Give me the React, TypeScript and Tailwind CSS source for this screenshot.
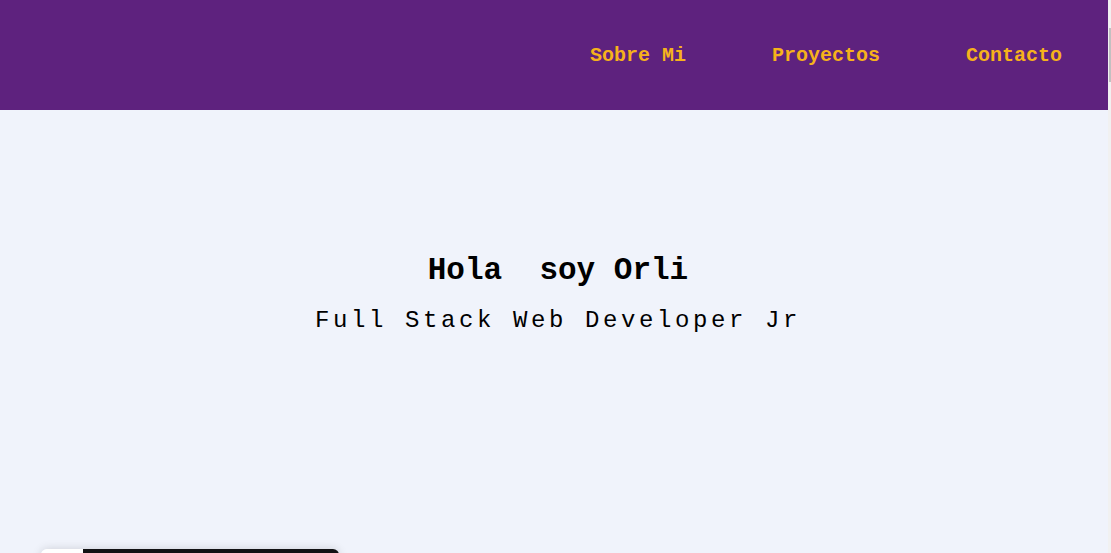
const links = ['Sobre Mi', 'Proyectos', 'Contacto'];

export default function App() {
  return (
    <div className="flex h-[553px] w-full overflow-hidden bg-[#f0f3fb]" style={{ fontFamily: '"Liberation Mono", "Courier New", monospace' }}>
      <div className="flex-1 min-w-0">
        <header className="h-[110px] bg-[#5e227e] flex items-center justify-end pr-[46px] pt-[2px]">
          <nav className="flex gap-[86px]">
            {links.map((l) => (
              <a key={l} href="#" className="text-[20px] font-bold text-[#f6b21b] leading-none">
                {l}
              </a>
            ))}
          </nav>
        </header>
        <section className="h-[439px] flex flex-col items-center pt-[145px]">
          <h1 className="text-[31px] font-bold text-black leading-none whitespace-pre pl-[8px]">Hola  soy Orli</h1>
          <p className="mt-[23px] text-[24px] leading-none text-black tracking-[3.6px] pl-[8px]">Full Stack Web Developer Jr</p>
        </section>
        <div className="ml-[41px] w-[298px] h-[40px] rounded-t-md overflow-hidden flex shadow-[0_0_10px_rgba(0,0,0,0.15)]">
          <div className="w-[42px] bg-white" />
          <div className="flex-1 bg-[#121214]" />
        </div>
      </div>
      <div className="w-[3px] bg-[#f1f1f1] flex justify-end pt-[28px]">
        <div className="w-[2px] h-[54px] bg-[#c1c1c1]" />
      </div>
    </div>
  );
}
